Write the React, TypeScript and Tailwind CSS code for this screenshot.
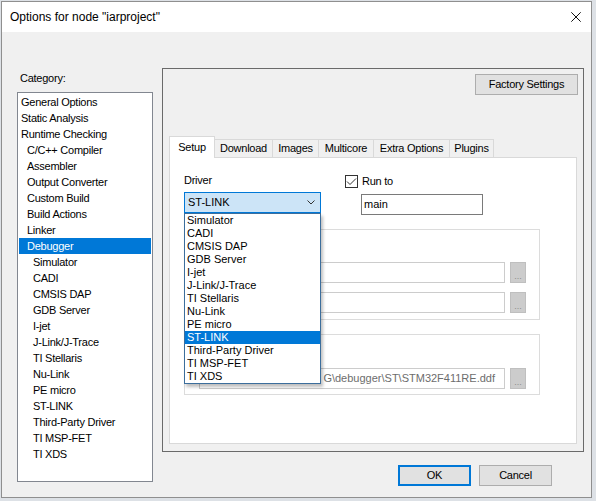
import React from "react";

const categories: [string, number][] = [
  ["General Options", 0],
  ["Static Analysis", 0],
  ["Runtime Checking", 0],
  ["C/C++ Compiler", 1],
  ["Assembler", 1],
  ["Output Converter", 1],
  ["Custom Build", 1],
  ["Build Actions", 1],
  ["Linker", 1],
  ["Debugger", 1],
  ["Simulator", 2],
  ["CADI", 2],
  ["CMSIS DAP", 2],
  ["GDB Server", 2],
  ["I-jet", 2],
  ["J-Link/J-Trace", 2],
  ["TI Stellaris", 2],
  ["Nu-Link", 2],
  ["PE micro", 2],
  ["ST-LINK", 2],
  ["Third-Party Driver", 2],
  ["TI MSP-FET", 2],
  ["TI XDS", 2],
];

const drivers = [
  "Simulator",
  "CADI",
  "CMSIS DAP",
  "GDB Server",
  "I-jet",
  "J-Link/J-Trace",
  "TI Stellaris",
  "Nu-Link",
  "PE micro",
  "ST-LINK",
  "Third-Party Driver",
  "TI MSP-FET",
  "TI XDS",
];

const tabs: [string, number][] = [
  ["Download", 58],
  ["Images", 46],
  ["Multicore", 55],
  ["Extra Options", 76],
  ["Plugins", 44],
];

function DotsButton() {
  return (
    <div className="ml-[5px] w-[16px] h-[21px] bg-[#cccccc] border border-[#bfbfbf] flex items-end justify-center text-[9px] leading-[12px] text-[#8c8c8c]">
      ...
    </div>
  );
}

function Field({ text }: { text?: string }) {
  return (
    <div className="w-[306px] h-[21px] border border-[#cccccc] bg-white pr-[9px] flex items-center justify-end overflow-hidden whitespace-nowrap text-[11px] text-[#6d6d6d] font-['Liberation_Sans',Arial,sans-serif]">
      {text}
    </div>
  );
}

export default function App() {
  return (
    <div className="w-[596px] h-[501px] bg-[#dde1e6] pt-px pl-px overflow-hidden font-['Liberation_Sans',Arial,sans-serif] text-black">
      <div className="w-[591px] h-[497px] border border-[#8f8f8f] bg-[#f0f0f0] flex flex-col">
        {/* Title bar */}
        <div className="h-[30px] shrink-0 bg-white flex items-center justify-between pl-[8px] pr-[10px]">
          <span className="text-[12px] leading-[16px]">Options for node "iarproject"</span>
          <svg width="10" height="10" viewBox="0 0 10 10">
            <path d="M0.3 0.3 L9.7 9.7 M9.7 0.3 L0.3 9.7" stroke="#111" strokeWidth="1" fill="none" />
          </svg>
        </div>

        {/* Body */}
        <div className="flex pl-[15px]">
          {/* Left column */}
          <div className="w-[136px] pt-[38px] flex flex-col">
            <div className="h-[16px] leading-[16px] pl-[3px] text-[11px] tracking-[-0.25px]">Category:</div>
            <div className="mt-[6px] h-[390px] border border-[#828790] bg-white pt-px px-px">
              {categories.map(([name, lvl], i) => {
                const sel = name === "Debugger" && i === 9;
                return (
                  <div
                    key={i}
                    className={
                      "h-[16px] leading-[16px] text-[11px] tracking-[-0.25px] whitespace-nowrap " +
                      (sel ? "bg-[#0078d7] text-white " : "text-black ") +
                      (lvl === 0 ? "pl-[2px]" : lvl === 1 ? "pl-[8px]" : "pl-[14px]")
                    }
                  >
                    {name}
                  </div>
                );
              })}
            </div>
          </div>

          {/* Right column */}
          <div className="ml-[9px] pt-[36px] flex flex-col">
            <div className="w-[422px] h-[384px] border border-[#6a6a6a] flex flex-col">
              {/* Factory settings */}
              <div className="pt-[5px] pr-[5px] flex justify-end">
                <div className="w-[103px] h-[21px] bg-[#e1e1e1] border border-[#adadad] flex items-center justify-center text-[11px] tracking-[-0.25px]">
                  Factory Settings
                </div>
              </div>

              {/* Tabs */}
              <div className="mt-[41px] pl-[6px] h-[22px] flex items-end relative z-10">
                <div className="w-[46px] h-[22px] bg-white border-t border-l border-r border-[#d9d9d9] flex justify-center pt-[2px] text-[11px] leading-[16px] tracking-[-0.25px]">
                  Setup
                </div>
                {tabs.map(([t, w]) => (
                  <div
                    key={t}
                    style={{ width: w }}
                    className="h-[18px] mb-px bg-[#f0f0f0] border-t border-r border-[#d9d9d9] flex items-center justify-center text-[11px] tracking-[-0.25px]"
                  >
                    {t}
                  </div>
                ))}
              </div>

              {/* Tab panel */}
              <div className="-mt-px mx-[6px] h-[287px] border border-[#d9d9d9] bg-white pl-[14px] pt-[14px] flex flex-col">
                <div className="flex">
                  {/* Driver */}
                  <div className="w-[137px] flex flex-col">
                    <div className="h-[16px] leading-[16px] text-[11px] tracking-[-0.25px]">Driver</div>
                    <div className="mt-[4px] relative">
                      <div className="h-[21px] bg-[#cce4f7] border border-[#0078d7] flex items-center justify-between pl-[3px] pr-[5px] text-[11px]">
                        <span>ST-LINK</span>
                        <svg width="8" height="5" viewBox="0 0 8 5">
                          <path d="M0.5 0.5 L4 4 L7.5 0.5" stroke="#333" strokeWidth="1" fill="none" />
                        </svg>
                      </div>
                      {/* Open dropdown list */}
                      <div className="absolute left-0 top-full w-[137px] z-20 bg-white border border-[#3c6e9c] shadow-[2px_3px_3px_rgba(0,0,0,0.25)]">
                        {drivers.map((d) => (
                          <div
                            key={d}
                            className={
                              "h-[13px] leading-[13px] pl-[2px] text-[11px] whitespace-nowrap " +
                              (d === "ST-LINK" ? "bg-[#0078d7] text-white" : "text-black")
                            }
                          >
                            {d}
                          </div>
                        ))}
                      </div>
                    </div>
                  </div>

                  {/* Run to */}
                  <div className="ml-[24px] pt-[3px] flex flex-col">
                    <div className="flex items-center h-[13px]">
                      <div className="w-[13px] h-[13px] border border-[#333333] bg-white flex items-center justify-center">
                        <svg width="11" height="11" viewBox="0 0 11 11">
                          <path d="M1 5.5 L4 8.5 L10 2.5" stroke="#333" strokeWidth="1" fill="none" />
                        </svg>
                      </div>
                      <span className="ml-[4px] text-[11px] leading-[13px] tracking-[-0.25px]">Run to</span>
                    </div>
                    <div className="ml-[16px] mt-[6px] w-[122px] h-[21px] border border-[#7a7a7a] bg-white flex items-center pl-[2px] text-[11px]">
                      main
                    </div>
                  </div>
                </div>

                {/* Group 1 */}
                <div className="mt-[14px] w-[356px] h-[91px] border border-[#dcdcdc] pt-[32px] pl-[14px] flex flex-col">
                  <div className="flex">
                    <Field />
                    <DotsButton />
                  </div>
                  <div className="flex mt-[9px]">
                    <Field />
                    <DotsButton />
                  </div>
                </div>

                {/* Group 2 */}
                <div className="mt-[14px] w-[356px] h-[61px] border border-[#dcdcdc] pt-[33px] pl-[14px] flex flex-col">
                  <div className="flex">
                    <Field text="G\debugger\ST\STM32F411RE.ddf" />
                    <DotsButton />
                  </div>
                </div>
              </div>
            </div>

            {/* OK / Cancel */}
            <div className="mt-[13px] pr-[32px] flex justify-end">
              <div className="w-[73px] h-[21px] bg-[#e1e1e1] border-2 border-[#0078d7] flex items-center justify-center text-[11px] tracking-[-0.25px]">
                OK
              </div>
              <div className="ml-[8px] w-[73px] h-[21px] bg-[#e1e1e1] border border-[#adadad] flex items-center justify-center text-[11px] tracking-[-0.25px]">
                Cancel
              </div>
            </div>
          </div>
        </div>
      </div>
    </div>
  );
}
